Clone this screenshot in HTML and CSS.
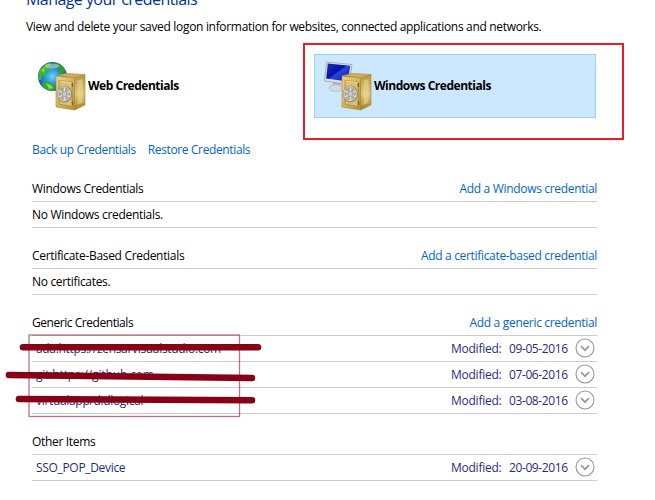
FILE: index.html
```html
<!DOCTYPE html>
<html lang="en">
<head>
<meta charset="utf-8">
<title>Credential Manager</title>
<link rel="stylesheet" href="styles.css">
</head>
<body>
<svg class="defs" width="0" height="0" aria-hidden="true">
  <defs>
    <linearGradient id="front" x1="0" y1="0" x2="1" y2="1"><stop offset="0" stop-color="#ecd68b"/><stop offset=".5" stop-color="#d5b65c"/><stop offset="1" stop-color="#b38d2f"/></linearGradient>
    <linearGradient id="side" x1="0" y1="0" x2="0" y2="1"><stop offset="0" stop-color="#b8943b"/><stop offset=".55" stop-color="#dfc777"/><stop offset="1" stop-color="#a37c22"/></linearGradient>
    <radialGradient id="sea" cx=".5" cy=".5" r=".55"><stop offset="0" stop-color="#66d8f4"/><stop offset=".5" stop-color="#2b91d6"/><stop offset="1" stop-color="#164a9b"/></radialGradient>
    <linearGradient id="screen" x1="0" y1="0" x2="1" y2="1"><stop offset="0" stop-color="#1b2fae"/><stop offset=".45" stop-color="#0510b0"/><stop offset=".5" stop-color="#2a45d8"/><stop offset="1" stop-color="#0a16bd"/></linearGradient>
    <g id="safe">
      <path d="M19 15 L29 12.3 L48 13.5 L38 17 Z" fill="#cfae55" stroke="#a5853a" stroke-width=".5"/>
      <path d="M37.500 17 L48 13.500 L48 44 L37.500 49 Z" fill="url(#side)" stroke="#a5853a" stroke-width=".6"/>
      <path d="M40.500 19.500 L45.500 18 L45.500 41.500 L40.500 44 Z" fill="#efe0a0" opacity=".5"/>
      <path d="M19 15 L37.500 17 L37.500 49 L19 46 Z" fill="url(#front)" stroke="#a5853a" stroke-width=".6"/>
      <path d="M22 19.500 L35 21 L35 45.500 L22 43.300 Z" fill="#dcc06b" stroke="#a38843" stroke-width=".8"/>
      <path d="M22.500 20.200 L34.500 21.600" stroke="#f7eaba" stroke-width=".7"/>
      <path d="M35.500 22 v4 M35.500 40 v4" stroke="#6d6756" stroke-width="1.300"/>
      <ellipse cx="27.500" cy="33" rx="6.400" ry="7.300" fill="#b9ac82" stroke="#8b8b8a" stroke-width="2.200"/>
      <ellipse cx="27.200" cy="32.700" rx="6.200" ry="7" fill="none" stroke="#dcdddd" stroke-width="1"/>
      <path d="M27.500 26.500 V39.500 M22 30 L33 36 M22 36 L33 30" stroke="#dedfe0" stroke-width="1.300"/>
      <circle cx="27.500" cy="33" r="2.500" fill="#c8cbd0" stroke="#85878b" stroke-width=".6"/>
    </g>
    <g id="chevron" fill="none">
      <circle cx="10" cy="10" r="9" stroke="#979797" stroke-width="1.100"/>
      <path d="M6 8.200 L10 12.200 L14 8.200" stroke="#999" stroke-width="1.700"/>
    </g>
  </defs>
</svg>

<main class="page">
  <h1 class="title">Manage your credentials</h1>
  <p class="intro">View and delete your saved logon information for websites, connected applications and networks.</p>

  <div class="vaults">
    <div class="vault">
      <svg class="vault-icon" viewBox="0 0 49 50">
        <circle cx="15.500" cy="15.500" r="14.500" fill="url(#sea)"/>
        <path d="M2 11 Q5 4 12 2 L15 4 L11 6 L14 8 L9 11 L8 15 L5 14 L4 19 L1.500 19 Q.7 15 2 11Z" fill="#43b82e"/>
        <path d="M18 1.500 Q25 3 28.500 10 L24 13 L20 9 L22 7 L17 5Z" fill="#2f9e31"/>
        <path d="M5 22 L9 20 L14 22 L18 26 L17 30 Q10 30 6 26Z" fill="#36a72c"/>
        <path d="M9 22 L14 24 L16 27 L12 28Z M4 10 L8 6 L7 11Z" fill="#89dc4b"/>
        <ellipse cx="15" cy="5" rx="7" ry="2.500" fill="#fff" opacity=".4"/>
        <use href="#safe"/>
      </svg>
      <span class="vault-name">Web Credentials</span>
    </div>
    <div class="marked">
      <div class="vault vault-selected">
        <svg class="vault-icon" viewBox="0 0 49 50">
          <path d="M10 21 L17 22 L18 26 L9 26Z" fill="#aeb6be"/>
          <ellipse cx="13" cy="27" rx="7" ry="3.400" fill="#d3d9df" stroke="#a4adb5" stroke-width=".6"/>
          <path d="M3.500 1 L29 3.500 L26 23.500 L1.500 20Z" fill="#dde2e7" stroke="#9ba5af" stroke-width=".8"/>
          <path d="M4.800 2.500 L27.300 4.800 L24.800 20.500 L3.200 17.500Z" fill="url(#screen)"/>
          <use href="#safe"/>
        </svg>
        <span class="vault-name">Windows Credentials</span>
      </div>
    </div>
  </div>

  <nav class="actions"><a>Back up Credentials</a><a>Restore Credentials</a></nav>

  <section class="group">
    <div class="row head"><span>Windows Credentials</span><a>Add a Windows credential</a></div>
    <div class="row"><span>No Windows credentials.</span></div>
  </section>
  <section class="group">
    <div class="row head"><span>Certificate-Based Credentials</span><a>Add a certificate-based credential</a></div>
    <div class="row"><span>No certificates.</span></div>
  </section>
  <section class="group">
    <div class="row head"><span class="tight">Generic Credentials</span><a>Add a generic credential</a></div>
    <div class="row item"><span class="name">ada:https://zensarvisualstudio.com</span><span class="label">Modified:</span><span class="date">09-05-2016</span><svg class="toggle" viewBox="0 0 20 20"><use href="#chevron"/></svg></div>
    <div class="row item"><span class="name loose">git:https://github.com</span><span class="label">Modified:</span><span class="date">07-06-2016</span><svg class="toggle" viewBox="0 0 20 20"><use href="#chevron"/></svg></div>
    <div class="row item"><span class="name">virtualapp/didlogical</span><span class="label">Modified:</span><span class="date">03-08-2016</span><svg class="toggle" viewBox="0 0 20 20"><use href="#chevron"/></svg></div>
    <svg class="scribble" viewBox="0 0 270 90">
      <rect x="24" y="5" width="210.500" height="81.500" fill="none" stroke="#880015" stroke-opacity=".55" stroke-width="1.300"/>
      <g stroke="#880015" stroke-width="6.600" stroke-linecap="round">
        <path d="M18 17.200 H253"/>
        <path d="M4 45 L247 48"/>
        <path d="M14 69 L247 70.200"/>
      </g>
    </svg>
  </section>
  <section class="group">
    <div class="row head"><span>Other Items</span></div>
    <div class="row item"><span class="name">SSO_POP_Device</span><span class="label">Modified:</span><span class="date">20-09-2016</span><svg class="toggle" viewBox="0 0 20 20"><use href="#chevron"/></svg></div>
  </section>
</main>
</body>
</html>
```
FILE: styles.css
```css
* { box-sizing: border-box; }
body {
  margin: 0;
  width: 655px;
  height: 500px;
  overflow: hidden;
  background: #fff;
  color: #000;
  font: 12px/16px "Open Sans", "Noto Sans", sans-serif;
  letter-spacing: -0.32px;
  white-space: nowrap;
}
.defs { position: absolute; }
.page { display: flex; flex-direction: column; }
.title {
  margin: -13px 0 0 26px;
  font-size: 16px;
  font-weight: 400;
  line-height: 24px;
  letter-spacing: -0.56px;
  color: #003399;
}
.intro { margin: 8px 0 0 26px; }
.vaults { display: flex; margin-top: 8px; height: 97px; }
.vault { display: flex; align-items: center; width: 266px; height: 64px; margin: 11px 0 0 37px; }
.vault-icon { width: 49px; height: 50px; flex: none; }
.vault-name { margin-left: 2px; font-weight: 700; letter-spacing: -0.48px; }
.marked { width: 321px; height: 97px; border: 2px solid #ed1c24; }
.vault-selected {
  width: 282px;
  margin: 9px 0 0 9px;
  padding-left: 8px;
  background: #cce8ff;
  border: 1px solid #99d1ff;
}
a { color: #0066cc; }
.actions { display: flex; gap: 12px; margin: 2px 0 3px 32px; letter-spacing: -0.37px; }
.group { position: relative; width: 565px; margin: 0 0 0 32px; padding-top: 15px; }
.row {
  display: flex;
  align-items: center;
  height: 26px;
  border-bottom: 1px solid #ccc;
}
.head { justify-content: space-between; }
.tight { letter-spacing: -0.45px; }
.item { color: #1f2b88; padding: 0 2px 0 4px; }
.name { flex: 1; }
.loose { letter-spacing: -0.15px; }
.label { width: 58px; letter-spacing: -0.25px; }
.date { width: 66px; letter-spacing: -0.4px; }
.toggle { width: 20px; height: 20px; margin-top: -1px; }
.scribble { position: absolute; left: -27px; top: 35px; width: 270px; height: 90px; }
```
